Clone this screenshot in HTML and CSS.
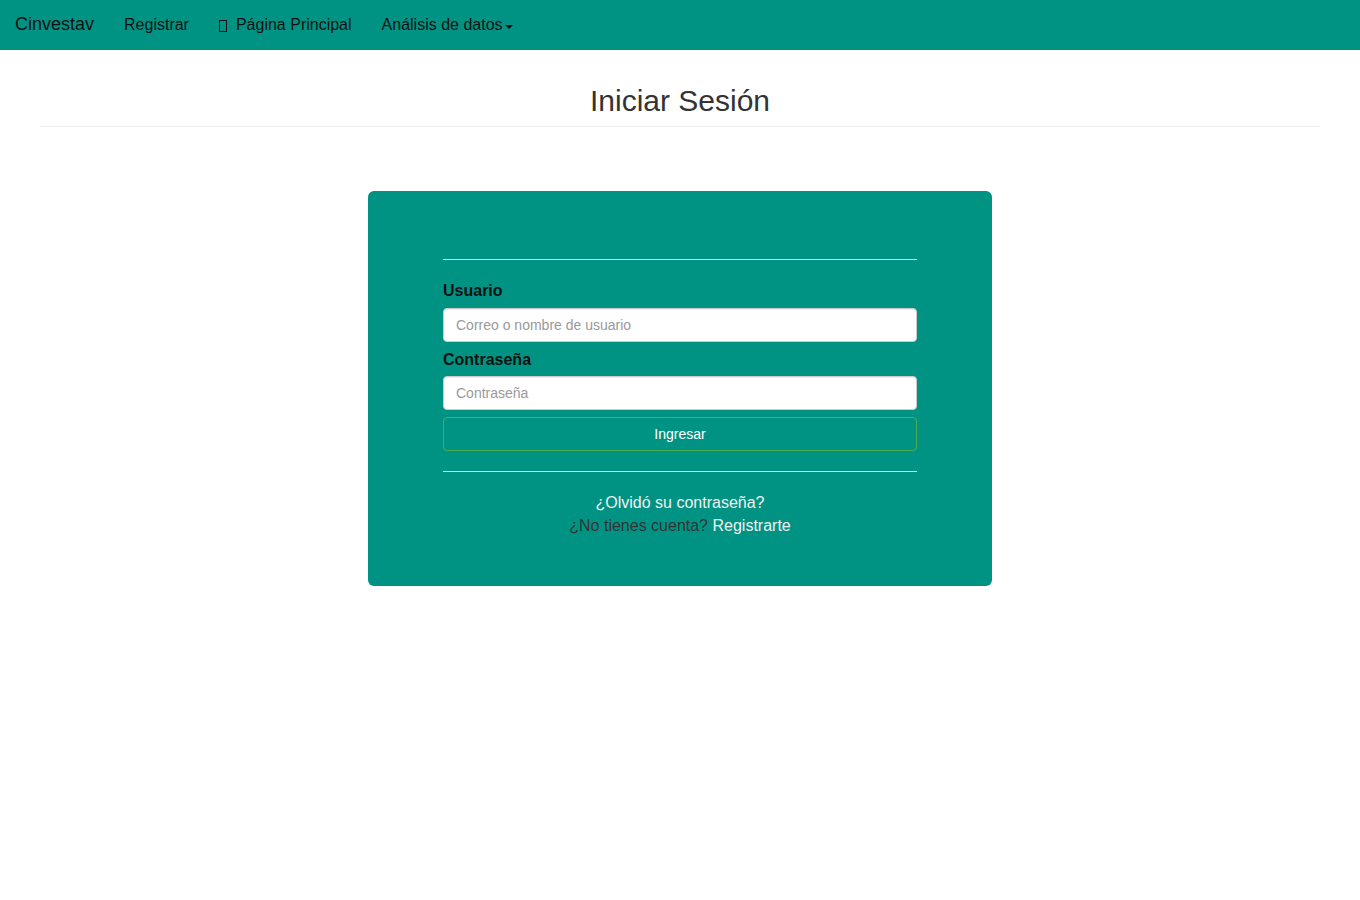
FILE: index.html
```html
<!DOCTYPE html>
<html lang="es">
<head>
  <meta charset="UTF-8" />
  <meta name="viewport" content="width=device-width, initial-scale=1.0"/>
  <title>Iniciar Sesión</title>
  <link rel="stylesheet" href="styles.css">
</head>
<body>

  <nav class="navbar">
    <a class="brand" href="#">Cinvestav</a>
    <a class="nav-link" href="#">Registrar</a>
    <a class="nav-link" href="#"><span class="icon-home"></span>Página Principal</a>
    <a class="nav-link" href="#">Análisis de datos<span class="caret"></span></a>
  </nav>

  <div class="container">
    <div class="page-header">
      <h1>Iniciar Sesión</h1>
    </div>

    <div class="login-card">
      <hr class="card-line">

      <form class="login-form" onsubmit="return false;">
        <label for="usuario">Usuario</label>
        <input type="text" id="usuario" placeholder="Correo o nombre de usuario">

        <label for="password" class="second">Contraseña</label>
        <input type="password" id="password" placeholder="Contraseña">

        <button type="submit" class="btn-login">Ingresar</button>
      </form>

      <hr class="card-line">

      <div class="links">
        <a href="#">¿Olvidó su contraseña?</a><br>
        <span class="muted">¿No tienes cuenta?</span> <a href="#">Registrarte</a>
      </div>
    </div>
  </div>

</body>
</html>
```

FILE: styles.css
```css
* {
  box-sizing: border-box;
  margin: 0;
  padding: 0;
  font-family: 'Liberation Sans', Arial, sans-serif;
}

body {
  background-color: #fff;
  color: #333;
  font-size: 14px;
  line-height: 1.42857;
}

a {
  text-decoration: none;
}

/* barra superior */
.navbar {
  height: 50px;
  background-color: #009383;
  display: flex;
  align-items: center;
}

.brand {
  color: #111;
  font-size: 18px;
  padding: 0 15px;
}

.nav-link {
  color: #111;
  font-size: 16px;
  padding: 0 15px;
  display: flex;
  align-items: center;
}

.icon-home {
  display: inline-block;
  width: 8px;
  height: 12px;
  border: 1px solid #111;
  margin-right: 9px;
  margin-top: 1px;
}

.caret {
  display: inline-block;
  width: 0;
  height: 0;
  border-top: 4px solid #111;
  border-left: 4px solid transparent;
  border-right: 4px solid transparent;
  margin-left: 2px;
  margin-top: 3px;
}

.container {
  padding: 0 40px;
}

.page-header {
  margin-top: 34px;
  padding-bottom: 9px;
  border-bottom: 1px solid #eee;
  text-align: center;
}

.page-header h1 {
  font-size: 30px;
  font-weight: normal;
  line-height: 1.1;
  color: #333;
}

/* tarjeta de acceso */
.login-card {
  width: 624px;
  margin: 64px auto 0;
  background-color: #009383;
  border-radius: 6px;
  padding: 68px 75px 49px;
}

.card-line {
  border: none;
  border-top: 1px solid #b4f5ea;
  margin: 0 0 20px;
}

.login-form {
  display: flex;
  flex-direction: column;
  margin-bottom: 20px;
}

.login-form label {
  font-size: 16px;
  font-weight: bold;
  color: #111;
  margin-bottom: 5px;
}

.login-form label.second {
  margin-top: 7px;
  margin-bottom: 4px;
}

.login-form input {
  height: 34px;
  padding: 6px 12px;
  font-size: 14px;
  color: #555;
  background-color: #fff;
  border: 1px solid #ccc;
  border-radius: 4px;
  box-shadow: inset 0 1px 1px rgba(0, 0, 0, 0.075);
}

.login-form input::placeholder {
  color: #999;
}

.btn-login {
  margin-top: 7px;
  height: 34px;
  background-color: transparent;
  border: 1px solid #4cae4c;
  border-radius: 4px;
  color: #fff;
  font-size: 14px;
  cursor: pointer;
}

.links {
  text-align: center;
  font-size: 16px;
}

.links a {
  color: #f0f0f0;
}

.links .muted {
  color: #333;
}
```
